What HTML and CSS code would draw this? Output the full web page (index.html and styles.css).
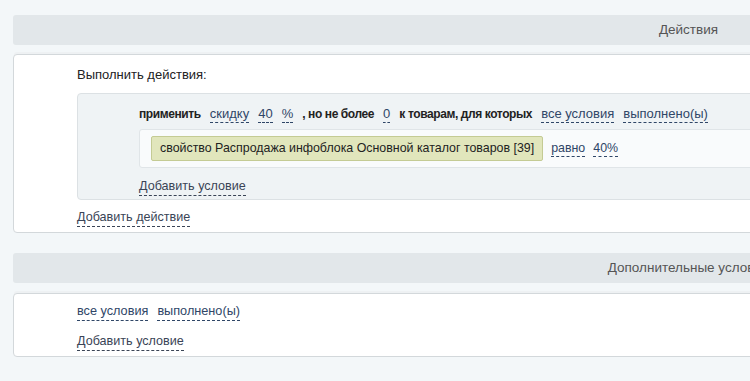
FILE: index.html
```html
<!DOCTYPE html>
<html lang="ru">
<head>
  <meta charset="UTF-8" />
  <title>Правила работы с корзиной</title>
  <link rel="stylesheet" href="styles.css">
</head>
<body>
  <div class="page">
    <div class="section">
      <div class="section-head">Действия</div>
      <div class="section-body">
        <div class="label">Выполнить действия:</div>
        <div class="action">
          <div class="action-line">
            <b>применить</b>
            <a class="link">скидку</a>
            <a class="link">40</a>
            <a class="link">%</a>
            <b>, но не более</b>
            <a class="link">0</a>
            <b>к товарам, для которых</b>
            <a class="link">все условия</a>
            <a class="link">выполнено(ы)</a>
          </div>
          <div class="cond-row">
            <span class="prop">свойство Распродажа инфоблока Основной каталог товаров [39]</span>
            <a class="link">равно</a>
            <a class="link">40%</a>
          </div>
          <a class="link add">Добавить условие</a>
        </div>
        <a class="link add">Добавить действие</a>
      </div>
    </div>

    <div class="section">
      <div class="section-head">Дополнительные условия</div>
      <div class="section-body second">
        <div class="cond-line">
          <a class="link">все условия</a>
          <a class="link">выполнено(ы)</a>
        </div>
        <a class="link add">Добавить условие</a>
      </div>
    </div>
  </div>
</body>
</html>
```

FILE: styles.css
```css
body {
  margin: 0;
  background: #f3f7f9;
  font-family: "Liberation Sans", Arial, sans-serif;
  font-size: 13px;
  color: #222;
  overflow: hidden;
}

.page {
  width: 1351px;
  padding: 15px 0 0 13px;
}

.section {
  margin-bottom: 20px;
}

.section-head {
  background: #e2e7ea;
  height: 30px;
  line-height: 30px;
  text-align: center;
  color: #555;
  font-size: 13.5px;
  border-radius: 3px;
}

.section-body {
  margin-top: 9px;
  background: #fff;
  border: 1px solid #d3d8db;
  border-radius: 4px;
  padding: 12px 0 5px 63px;
  box-shadow: 0 -3px 0 -1px #eef1f3;
}

.section-body.second {
  margin-top: 10px;
  padding-top: 10px;
  padding-bottom: 5px;
}

.label {
  line-height: 15px;
  margin-bottom: 11px;
}

.action {
  background: #eff3f5;
  border: 1px solid #dce1e4;
  border-radius: 4px;
  padding: 12px 0 3px 61px;
  margin-bottom: 9px;
}

.action-line {
  display: flex;
  align-items: baseline;
  gap: 9px;
  line-height: 15px;
  margin-bottom: 6px;
}

.action-line b {
  font-weight: bold;
  font-size: 12px;
  letter-spacing: -0.4px;
  color: #222;
}

.link {
  color: #2f4667;
  border-bottom: 1px dashed #2f4667;
  padding-bottom: 1px;
  cursor: pointer;
  text-decoration: none;
}

.add {
  display: inline-block;
  color: #3a4456;
  border-bottom-color: #3a4456;
  line-height: 15px;
  font-size: 12.6px;
}

.cond-row {
  display: flex;
  align-items: center;
  gap: 8px;
  font-size: 12.4px;
  background: #f9fbfc;
  border: 1px solid #e0e5e8;
  border-radius: 3px;
  padding: 6px 0 6px 11px;
  margin-bottom: 10px;
}

.prop {
  background: #e1e6bc;
  border: 1px solid #c4cb94;
  border-radius: 2px;
  padding: 5px 8px;
  line-height: 13px;
  color: #222;
}

.cond-line {
  display: flex;
  gap: 9px;
  line-height: 15px;
  font-size: 12.7px;
  margin: 0 0 12px;
}
```
